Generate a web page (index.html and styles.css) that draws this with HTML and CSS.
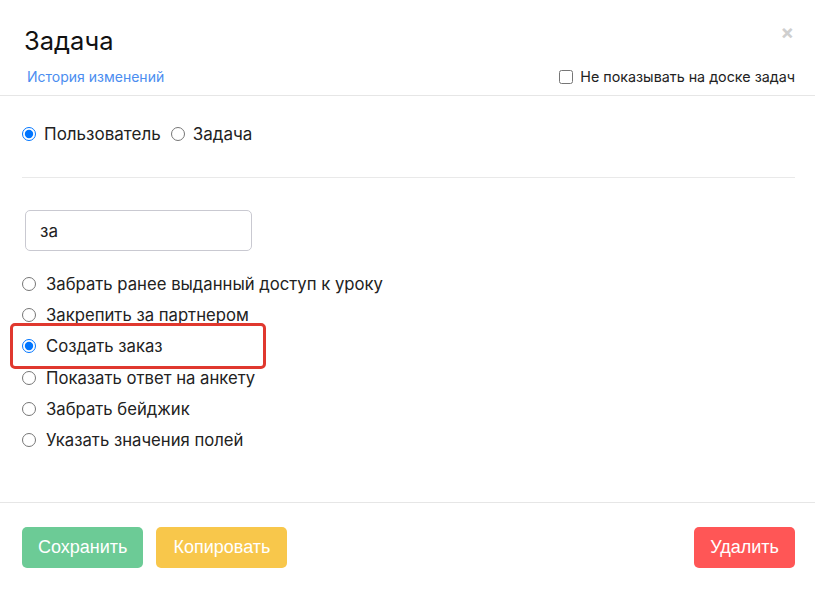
FILE: index.html
```html
<!DOCTYPE html>
<html>
    <head>
        <meta name="viewport" content="width=device-width, initial-scale=1.0">
        <link rel="stylesheet" href="styles.css">
    </head>
    <body>
        <div class="modal">
            <div class="header">
                <p class="title">Задача</p>
                <span class="close">&times;</span>
                <div class="header-row">
                    <a class="history" href="#">История изменений</a>
                    <label class="hide-check"><input type="checkbox"> Не показывать на доске задач</label>
                </div>
            </div>

            <div class="content">
                <div class="type-row">
                    <label class="opt"><input type="radio" name="type" checked> Пользователь</label>
                    <label class="opt"><input type="radio" name="type"> Задача</label>
                </div>
                <hr class="line">
                <input class="search" type="text" value="за">
                <ul class="actions">
                    <li><label><input type="radio" name="act"> Забрать ранее выданный доступ к уроку</label></li>
                    <li><label><input type="radio" name="act"> Закрепить за партнером</label></li>
                    <li class="marked"><label><input type="radio" name="act" checked> Создать заказ</label><span class="highlight"></span></li>
                    <li><label><input type="radio" name="act"> Показать ответ на анкету</label></li>
                    <li><label><input type="radio" name="act"> Забрать бейджик</label></li>
                    <li><label><input type="radio" name="act"> Указать значения полей</label></li>
                </ul>
            </div>

            <div class="footer">
                <button class="btn save">Сохранить</button>
                <button class="btn copy">Копировать</button>
                <button class="btn delete">Удалить</button>
            </div>
        </div>
    </body>
</html>
```

FILE: styles.css
```css
body {
    margin: 0;
    background: #fff;
    font-family: Inter, "Noto Sans", sans-serif;
    color: #222;
}

.modal {
    width: 815px;
    height: 590px;
    display: flex;
    flex-direction: column;
}

.header {
    position: relative;
    padding: 26px 20px 10px 24px;
    border-bottom: 1px solid #e6e6e6;
}
.title {
    margin: 0;
    font-size: 25.5px;
    line-height: 30px;
    color: #111;
}
.close {
    position: absolute;
    top: 20px;
    right: 21px;
    font-size: 20px;
    font-weight: bold;
    color: #cfcfcf;
}
.header-row {
    display: flex;
    justify-content: space-between;
    align-items: center;
    margin-top: 12px;
}
.history {
    margin-left: 3px;
    font-size: 14px;
    color: #4b8df0;
    text-decoration: none;
}
.hide-check {
    font-size: 14.3px;
    color: #222;
    display: flex;
    align-items: center;
}
.hide-check input {
    margin: 0 7px 0 0;
    width: 14px;
    height: 14px;
}

.content {
    padding: 28px 20px 0 22px;
    flex: 1;
}
.type-row {
    display: flex;
    gap: 10px;
    font-size: 17px;
}
.opt {
    display: flex;
    align-items: center;
}
.opt input {
    margin: 0 8px 0 0;
    width: 14px;
    height: 14px;
}
.line {
    border: 0;
    border-top: 1px solid #e9e9e9;
    margin: 33px 0 32px 0;
}
.search {
    margin-left: 3px;
    width: 227px;
    height: 41px;
    box-sizing: border-box;
    border: 1px solid #c9c9d1;
    border-radius: 5px;
    padding: 0 14px;
    font-family: Inter, "Noto Sans", sans-serif;
    font-size: 17px;
    color: #222;
}
.actions {
    list-style: none;
    margin: 17px 0 0 0;
    padding: 0;
    font-size: 16.7px;
}
.actions li {
    height: 31.3px;
    display: flex;
    align-items: center;
}
.actions label {
    display: flex;
    align-items: center;
}
.actions input {
    margin: 0 10px 0 0;
    width: 14px;
    height: 14px;
}
.marked {
    position: relative;
}
.highlight {
    position: absolute;
    left: -12px;
    top: -8px;
    width: 250px;
    height: 40px;
    border: 3px solid #e0382e;
    border-radius: 5px;
}

.footer {
    border-top: 1px solid #e6e6e6;
    padding: 24px 20px 22px 22px;
    display: flex;
    gap: 13px;
}
.btn {
    height: 41px;
    padding: 0 16px;
    border: 0;
    border-radius: 5px;
    color: #fff;
    font-family: "Liberation Sans", Arial, sans-serif;
    font-size: 18px;
}
.save {
    background: #6ccb96;
}
.copy {
    background: #f8c74b;
    padding: 0 17px;
}
.delete {
    margin-left: auto;
    background: #ff5656;
}
```
